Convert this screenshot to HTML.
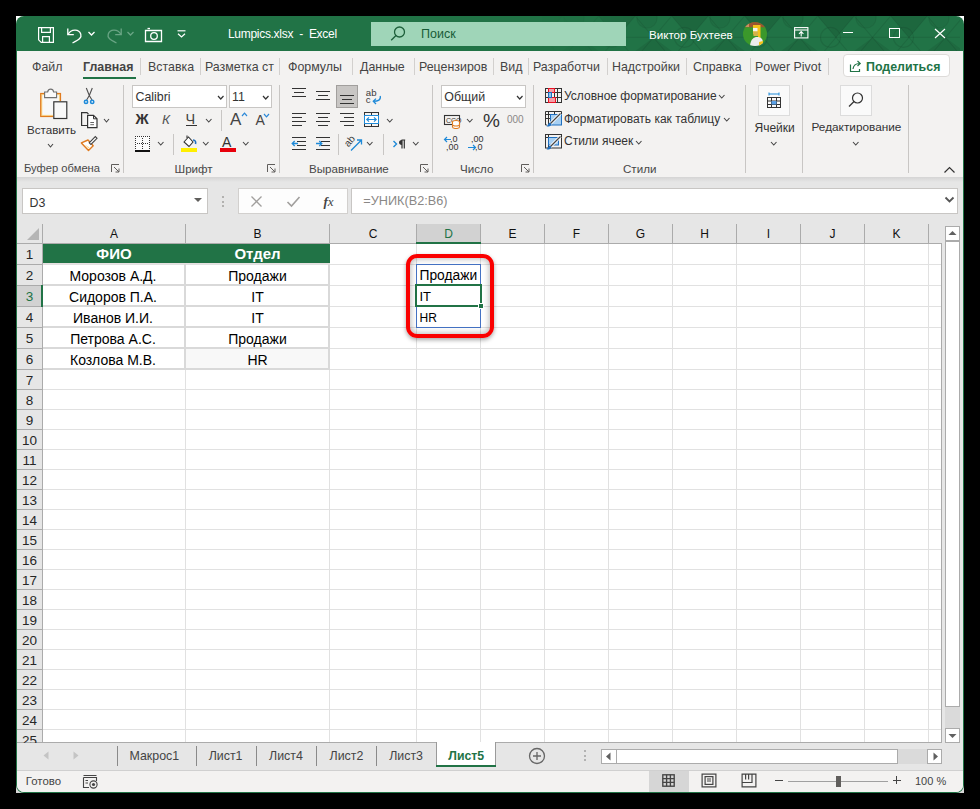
<!DOCTYPE html><html><head><meta charset="utf-8"><style>
html,body{margin:0;padding:0;}body{width:980px;height:809px;background:#000;position:relative;overflow:hidden;font-family:"Liberation Sans",sans-serif;font-size:12px;color:#262626}
div,svg{box-sizing:border-box}
</style></head><body>
<div style="position:absolute;left:16px;top:16px;width:948px;height:777px;background:linear-gradient(#fff 0,#fff 50%,#d8d8d8 50%,#d8d8d8 100%)"></div>
<div style="position:absolute;left:16px;top:16px;width:948px;height:777px;background:#217346;border-radius:8px"></div>
<div style="position:absolute;left:17px;top:51px;width:946px;height:741px;background:#f3f2f1;border-radius:0 0 7px 7px;overflow:hidden"></div>
<svg style="position:absolute;left:540px;top:16px;" width="420" height="35" viewBox="0 0 420 35"><defs><linearGradient id="fadeg" x1="0" x2="1" y1="0" y2="0"><stop offset="0" stop-color="#fff" stop-opacity="0"/><stop offset="0.25" stop-color="#fff" stop-opacity="1"/></linearGradient><mask id="fadem"><rect x="0" y="0" width="420" height="35" fill="url(#fadeg)"/></mask></defs><g mask="url(#fadem)"><path d="M-14.3 0 L22.2 0 L4.0 21.4 Z" fill="rgba(0,0,0,0.1)"/><path d="M-14.3 0 L-44.1 35 M-14.3 0 L15.5 35" stroke="rgba(0,0,0,0.09)" stroke-width="1.1" fill="none"/><path d="M40.5 21.4 L22.2 35 L58.7 35 Z" fill="rgba(0,0,0,0.08)"/><path d="M22.2 0 L-7.6 35 M22.2 0 L52.0 35" stroke="rgba(0,0,0,0.09)" stroke-width="1.1" fill="none"/><path d="M58.7 0 L95.2 0 L77.0 21.4 Z" fill="rgba(0,0,0,0.1)"/><path d="M58.7 0 L28.9 35 M58.7 0 L88.5 35" stroke="rgba(0,0,0,0.09)" stroke-width="1.1" fill="none"/><path d="M113.5 21.4 L95.2 35 L131.7 35 Z" fill="rgba(0,0,0,0.08)"/><path d="M95.2 0 L65.4 35 M95.2 0 L125.0 35" stroke="rgba(0,0,0,0.09)" stroke-width="1.1" fill="none"/><path d="M131.7 0 L168.2 0 L150.0 21.4 Z" fill="rgba(0,0,0,0.1)"/><path d="M131.7 0 L101.9 35 M131.7 0 L161.5 35" stroke="rgba(0,0,0,0.09)" stroke-width="1.1" fill="none"/><path d="M186.5 21.4 L168.2 35 L204.7 35 Z" fill="rgba(0,0,0,0.08)"/><path d="M168.2 0 L138.4 35 M168.2 0 L198.0 35" stroke="rgba(0,0,0,0.09)" stroke-width="1.1" fill="none"/><path d="M204.7 0 L241.2 0 L223.0 21.4 Z" fill="rgba(0,0,0,0.1)"/><path d="M204.7 0 L174.9 35 M204.7 0 L234.5 35" stroke="rgba(0,0,0,0.09)" stroke-width="1.1" fill="none"/><path d="M259.5 21.4 L241.2 35 L277.7 35 Z" fill="rgba(0,0,0,0.08)"/><path d="M241.2 0 L211.4 35 M241.2 0 L271.0 35" stroke="rgba(0,0,0,0.09)" stroke-width="1.1" fill="none"/><path d="M277.7 0 L314.2 0 L296.0 21.4 Z" fill="rgba(0,0,0,0.1)"/><path d="M277.7 0 L247.9 35 M277.7 0 L307.5 35" stroke="rgba(0,0,0,0.09)" stroke-width="1.1" fill="none"/><path d="M332.5 21.4 L314.2 35 L350.7 35 Z" fill="rgba(0,0,0,0.08)"/><path d="M314.2 0 L284.4 35 M314.2 0 L344.0 35" stroke="rgba(0,0,0,0.09)" stroke-width="1.1" fill="none"/><path d="M350.7 0 L387.2 0 L369.0 21.4 Z" fill="rgba(0,0,0,0.1)"/><path d="M350.7 0 L320.9 35 M350.7 0 L380.5 35" stroke="rgba(0,0,0,0.09)" stroke-width="1.1" fill="none"/><path d="M405.5 21.4 L387.2 35 L423.7 35 Z" fill="rgba(0,0,0,0.08)"/><path d="M387.2 0 L357.4 35 M387.2 0 L417.0 35" stroke="rgba(0,0,0,0.09)" stroke-width="1.1" fill="none"/><path d="M423.7 0 L460.2 0 L442.0 21.4 Z" fill="rgba(0,0,0,0.1)"/><path d="M423.7 0 L393.9 35 M423.7 0 L453.5 35" stroke="rgba(0,0,0,0.09)" stroke-width="1.1" fill="none"/><path d="M478.5 21.4 L460.2 35 L496.7 35 Z" fill="rgba(0,0,0,0.08)"/><path d="M460.2 0 L430.4 35 M460.2 0 L490.0 35" stroke="rgba(0,0,0,0.09)" stroke-width="1.1" fill="none"/><path d="M496.7 0 L533.2 0 L515.0 21.4 Z" fill="rgba(0,0,0,0.1)"/><path d="M496.7 0 L466.9 35 M496.7 0 L526.5 35" stroke="rgba(0,0,0,0.09)" stroke-width="1.1" fill="none"/><path d="M551.5 21.4 L533.2 35 L569.7 35 Z" fill="rgba(0,0,0,0.08)"/><path d="M533.2 0 L503.4 35 M533.2 0 L563.0 35" stroke="rgba(0,0,0,0.09)" stroke-width="1.1" fill="none"/><circle cx="-1.5" cy="21.4" r="10" stroke="rgba(0,0,0,0.09)" stroke-width="1.2" fill="none"/><circle cx="34.0" cy="2" r="10" stroke="rgba(0,0,0,0.08)" stroke-width="1.2" fill="rgba(0,0,0,0.04)"/><circle cx="71.5" cy="21.4" r="10" stroke="rgba(0,0,0,0.09)" stroke-width="1.2" fill="none"/><circle cx="107.0" cy="2" r="10" stroke="rgba(0,0,0,0.08)" stroke-width="1.2" fill="rgba(0,0,0,0.04)"/><circle cx="144.5" cy="21.4" r="10" stroke="rgba(0,0,0,0.09)" stroke-width="1.2" fill="none"/><circle cx="180.0" cy="2" r="10" stroke="rgba(0,0,0,0.08)" stroke-width="1.2" fill="rgba(0,0,0,0.04)"/><circle cx="217.5" cy="21.4" r="10" stroke="rgba(0,0,0,0.09)" stroke-width="1.2" fill="none"/><circle cx="253.0" cy="2" r="10" stroke="rgba(0,0,0,0.08)" stroke-width="1.2" fill="rgba(0,0,0,0.04)"/><circle cx="290.5" cy="21.4" r="10" stroke="rgba(0,0,0,0.09)" stroke-width="1.2" fill="none"/><circle cx="326.0" cy="2" r="10" stroke="rgba(0,0,0,0.08)" stroke-width="1.2" fill="rgba(0,0,0,0.04)"/><circle cx="363.5" cy="21.4" r="10" stroke="rgba(0,0,0,0.09)" stroke-width="1.2" fill="none"/><circle cx="399.0" cy="2" r="10" stroke="rgba(0,0,0,0.08)" stroke-width="1.2" fill="rgba(0,0,0,0.04)"/><circle cx="436.5" cy="21.4" r="10" stroke="rgba(0,0,0,0.09)" stroke-width="1.2" fill="none"/><circle cx="472.0" cy="2" r="10" stroke="rgba(0,0,0,0.08)" stroke-width="1.2" fill="rgba(0,0,0,0.04)"/><circle cx="509.5" cy="21.4" r="10" stroke="rgba(0,0,0,0.09)" stroke-width="1.2" fill="none"/><circle cx="545.0" cy="2" r="10" stroke="rgba(0,0,0,0.08)" stroke-width="1.2" fill="rgba(0,0,0,0.04)"/><path d="M0 21.4 H420" stroke="rgba(0,0,0,0.08)" stroke-width="1.1"/></g></svg>
<svg style="position:absolute;left:37px;top:26px;" width="19" height="18" viewBox="0 0 19 18"><g fill="none" stroke="#fff" stroke-width="1.2"><path d="M1.6 1.6 H16.4 V16.4 H4.2 L1.6 13.8 Z"/><path d="M4.6 1.6 V6.4 H13.4 V1.6"/><path d="M5.6 16.4 V10.6 H12.4 V16.4"/></g></svg>
<svg style="position:absolute;left:66px;top:26px;" width="18" height="18" viewBox="0 0 18 18"><g fill="none" stroke="#fff" stroke-width="1.3"><path d="M2 8.5 C5 3 13 2.5 14.8 8.2 C15.8 11.5 13.5 13.5 6.5 17"/><path d="M1.8 2.5 V8.6 H7.8"/></g></svg>
<svg style="position:absolute;left:87px;top:30px;" width="9" height="7" viewBox="0 0 9 7"><path d="M1.5 2 L4.5 5 L7.5 2" fill="none" stroke="#fff" stroke-width="1.3"/></svg>
<svg style="position:absolute;left:105px;top:26px;" width="18" height="18" viewBox="0 0 18 18"><g fill="none" stroke="#6aa585" stroke-width="1.3"><path d="M16 8.5 C13 3 5 2.5 3.2 8.2 C2.2 11.5 4.5 13.5 11.5 17"/><path d="M16.2 2.5 V8.6 H10.2"/></g></svg>
<svg style="position:absolute;left:126px;top:30px;" width="9" height="7" viewBox="0 0 9 7"><path d="M1.5 2 L4.5 5 L7.5 2" fill="none" stroke="#6aa585" stroke-width="1.3"/></svg>
<svg style="position:absolute;left:144px;top:27px;" width="19" height="16" viewBox="0 0 19 16"><g fill="none" stroke="#fff" stroke-width="1.3"><path d="M1.5 3.5 H17.5 V14.5 H1.5 Z"/><circle cx="10" cy="9" r="3.3"/><path d="M3.5 1.5 H6"/></g></svg>
<svg style="position:absolute;left:176px;top:29px;" width="11" height="10" viewBox="0 0 11 10"><g fill="none" stroke="#fff" stroke-width="1.2"><path d="M1.5 1.8 H9.5"/><path d="M2 4.8 L5.5 8 L9 4.8"/></g></svg>
<div style="position:absolute;left:228px;top:26px;white-space:nowrap;line-height:16px;color:#fff;font-size:12px;letter-spacing:-0.3px">Lumpics.xlsx&nbsp; - &nbsp;Excel</div>
<div style="position:absolute;left:371px;top:22px;width:255px;height:24px;background:#9fd5b8"></div>
<svg style="position:absolute;left:389px;top:25px;" width="18" height="18" viewBox="0 0 18 18"><g fill="none" stroke="#1d5f3a" stroke-width="1.3"><circle cx="10.5" cy="7" r="5"/><path d="M7 10.5 L2.2 15.3"/></g></svg>
<div style="position:absolute;left:421px;top:26px;white-space:nowrap;line-height:16px;color:#185c37;font-size:12.5px">Поиск</div>
<div style="position:absolute;left:649px;top:27px;white-space:nowrap;line-height:16px;color:#fff;font-size:11.6px">Виктор Бухтеев</div>
<svg style="position:absolute;left:742px;top:22px;" width="26" height="25" viewBox="0 0 26 25"><defs><clipPath id="av"><circle cx="13" cy="12" r="12"/></clipPath></defs><g clip-path="url(#av)"><rect width="26" height="25" fill="#3b982b"/><rect x="0" y="0" width="26" height="5.2" fill="#9a5530"/><rect x="3" y="1" width="4" height="4" fill="#c98e62"/><path d="M11 3 H18.5 V16 L16 17 V12 H11 Z" fill="#f3c21a"/><rect x="11" y="6" width="4.5" height="3.5" fill="#f2f2f2"/><path d="M11 9.5 H16 V14 H11.5 Z" fill="#d4b24a"/><path d="M8 24 C8.5 17 12 15 15 15 C19 15 21 17 21 21 L20 24 Z" fill="#ececec"/><path d="M17 20 L21 19 L21 23 L17 24 Z" fill="#f3c21a"/></g></svg>
<svg style="position:absolute;left:794px;top:27px;" width="15" height="12" viewBox="0 0 15 12"><g fill="none" stroke="#fff" stroke-width="1.1"><rect x="0.6" y="0.6" width="13.3" height="10.3"/><path d="M0.6 3 H13.9"/><path d="M7.2 9.5 V4.8 M5 6.8 L7.2 4.6 L9.4 6.8"/></g></svg>
<div style="position:absolute;left:843px;top:32px;width:10px;height:1px;background:#fff"></div>
<div style="position:absolute;left:889px;top:28px;width:11px;height:10px;border:1.1px solid #fff"></div>
<svg style="position:absolute;left:933.5px;top:27.5px;" width="12" height="11" viewBox="0 0 12 11"><path d="M1 1 L11 10 M11 1 L1 10" stroke="#fff" stroke-width="1.2"/></svg>
<div style="position:absolute;left:32px;top:59px;white-space:nowrap;line-height:16px;color:#444444;font-size:12.4px">Файл</div>
<div style="position:absolute;left:83px;top:59px;white-space:nowrap;line-height:16px;color:#444444;font-size:12.4px"><b>Главная</b></div>
<div style="position:absolute;left:148px;top:59px;white-space:nowrap;line-height:16px;color:#444444;font-size:12.4px">Вставка</div>
<div style="position:absolute;left:205px;top:59px;white-space:nowrap;line-height:16px;color:#444444;font-size:12.4px">Разметка ст</div>
<div style="position:absolute;left:288px;top:59px;white-space:nowrap;line-height:16px;color:#444444;font-size:12.4px">Формулы</div>
<div style="position:absolute;left:360px;top:59px;white-space:nowrap;line-height:16px;color:#444444;font-size:12.4px">Данные</div>
<div style="position:absolute;left:419px;top:59px;white-space:nowrap;line-height:16px;color:#444444;font-size:12.4px">Рецензиров</div>
<div style="position:absolute;left:500px;top:59px;white-space:nowrap;line-height:16px;color:#444444;font-size:12.4px">Вид</div>
<div style="position:absolute;left:533px;top:59px;white-space:nowrap;line-height:16px;color:#444444;font-size:12.4px">Разработчи</div>
<div style="position:absolute;left:612px;top:59px;white-space:nowrap;line-height:16px;color:#444444;font-size:12.4px">Надстройки</div>
<div style="position:absolute;left:693px;top:59px;white-space:nowrap;line-height:16px;color:#444444;font-size:12.4px">Справка</div>
<div style="position:absolute;left:755px;top:59px;white-space:nowrap;line-height:16px;color:#444444;font-size:12.4px">Power Pivot</div>
<div style="position:absolute;left:140px;top:58px;width:1px;height:17px;background:#d2d0ce"></div>
<div style="position:absolute;left:200px;top:58px;width:1px;height:17px;background:#d2d0ce"></div>
<div style="position:absolute;left:279px;top:58px;width:1px;height:17px;background:#d2d0ce"></div>
<div style="position:absolute;left:352px;top:58px;width:1px;height:17px;background:#d2d0ce"></div>
<div style="position:absolute;left:414px;top:58px;width:1px;height:17px;background:#d2d0ce"></div>
<div style="position:absolute;left:493px;top:58px;width:1px;height:17px;background:#d2d0ce"></div>
<div style="position:absolute;left:528px;top:58px;width:1px;height:17px;background:#d2d0ce"></div>
<div style="position:absolute;left:607px;top:58px;width:1px;height:17px;background:#d2d0ce"></div>
<div style="position:absolute;left:686px;top:58px;width:1px;height:17px;background:#d2d0ce"></div>
<div style="position:absolute;left:750px;top:58px;width:1px;height:17px;background:#d2d0ce"></div>
<div style="position:absolute;left:828px;top:58px;width:1px;height:17px;background:#d2d0ce"></div>
<div style="position:absolute;left:83px;top:77px;width:53px;height:2px;background:#217346"></div>
<div style="position:absolute;left:843px;top:54px;width:107px;height:23px;background:#fff;border:1px solid #dddbd9;border-radius:4px"></div>
<svg style="position:absolute;left:849px;top:59px;" width="14" height="14" viewBox="0 0 14 14"><g fill="none" stroke="#217346" stroke-width="1.2"><path d="M1.5 5.5 V12.5 H10.5 V10"/><path d="M4 10 C4.5 6 7 4.5 10.5 4.5 M8.5 2 L11.2 4.5 L8.5 7"/></g></svg>
<div style="position:absolute;left:866px;top:59px;white-space:nowrap;line-height:16px;color:#217346;font-size:12.4px"><b>Поделиться</b></div>
<div style="position:absolute;left:123px;top:85px;width:1px;height:88px;background:#c8c6c4"></div>
<div style="position:absolute;left:279px;top:85px;width:1px;height:88px;background:#c8c6c4"></div>
<div style="position:absolute;left:432px;top:85px;width:1px;height:88px;background:#c8c6c4"></div>
<div style="position:absolute;left:533px;top:85px;width:1px;height:88px;background:#c8c6c4"></div>
<div style="position:absolute;left:745px;top:85px;width:1px;height:88px;background:#c8c6c4"></div>
<div style="position:absolute;left:802px;top:85px;width:1px;height:88px;background:#c8c6c4"></div>
<div style="position:absolute;left:908px;top:85px;width:1px;height:88px;background:#c8c6c4"></div>
<div style="position:absolute;left:17px;top:177px;width:946px;height:5px;background:linear-gradient(#d4d4d4,#e6e6e6)"></div>
<div style="position:absolute;left:17px;top:182px;width:946px;height:42px;background:#e6e6e6"></div>
<svg style="position:absolute;left:38px;top:87px;" width="31" height="34" viewBox="0 0 31 34">
<rect x="2.7" y="6.5" width="19.8" height="23" fill="#f9d88e" stroke="#e07b1f" stroke-width="1.2"/>
<rect x="4.3" y="8.1" width="16.6" height="19.8" fill="#f8f8f8"/>
<path d="M6.6 10.6 V5 H9.6 C10.5 1.2 15 1.2 15.6 5 H18.6 V10.6 Z" fill="#fafafa" stroke="#707070" stroke-width="1.1"/>
<rect x="15" y="14" width="14.5" height="18" fill="#fff"/>
<rect x="15.8" y="14.8" width="13" height="16.7" fill="#f8f8f8" stroke="#333" stroke-width="1.2"/>
</svg>
<div style="position:absolute;left:27px;top:124.18px;white-space:nowrap;line-height:11.6px;font-size:11.6px;color:#333333">Вставить</div>
<svg style="position:absolute;left:47px;top:142.5px;" width="7" height="5" viewBox="0 0 7 5"><path d="M1 1 L3.50 4.00 L6.00 1" fill="none" stroke="#444" stroke-width="1.1"/></svg>
<svg style="position:absolute;left:82px;top:86px;" width="14" height="19" viewBox="0 0 14 19"><g fill="none" stroke="#505050" stroke-width="1.1"><path d="M4.3 2 L7.3 9.5 M10.3 2 L7.3 9.5 M7.3 9.5 L4.6 14 M7.3 9.5 L10 14"/></g><g fill="#fff" stroke="#1f8ad8" stroke-width="1.6"><circle cx="4" cy="15.9" r="1.6"/><circle cx="10.2" cy="15.9" r="1.6"/></g></svg>
<svg style="position:absolute;left:80px;top:111px;" width="19" height="18" viewBox="0 0 19 18"><g fill="none" stroke="#333" stroke-width="1.2"><path d="M7.5 14.5 H1.6 V1.6 H7 L8.5 3.1"/></g><path d="M7.6 4.3 H13.5 L17 7.8 V16.6 H7.6 Z" fill="#fff" stroke="#333" stroke-width="1.2"/><path d="M13.5 4.3 V7.8 H17" fill="none" stroke="#333" stroke-width="1"/><path d="M10.3 11.5 H14 M10.3 13.7 H14" stroke="#555" stroke-width="0.9"/></svg>
<svg style="position:absolute;left:103px;top:118px;" width="7" height="5" viewBox="0 0 7 5"><path d="M1 1 L3.50 4.00 L6.00 1" fill="none" stroke="#444" stroke-width="1.1"/></svg>
<svg style="position:absolute;left:80px;top:135px;" width="18" height="17" viewBox="0 0 18 17"><path d="M1.4 7.9 L8.5 15.5 L13.2 10.8 L8 5 Z" fill="#fff" stroke="#e07b1f" stroke-width="1.4" stroke-linejoin="round"/><path d="M4.5 9.2 L8.5 13.5 L9.5 12.5 Z" fill="#f9d88e"/><path d="M9.2 7.8 L15.3 1.6 L17 3.3 L10.9 9.4 Z" fill="#fff" stroke="#444" stroke-width="1.1"/></svg>
<div style="position:absolute;left:24px;top:163.02px;white-space:nowrap;line-height:11.2px;font-size:11.2px;color:#484848">Буфер обмена</div>
<svg style="position:absolute;left:111px;top:164px;" width="9" height="9" viewBox="0 0 9 9"><g fill="none" stroke="#605e5c" stroke-width="1"><path d="M0.5 8 V0.5 H8"/><path d="M3 3 L8 8 M8 4.5 V8 H4.5"/></g></svg>
<div style="position:absolute;left:132px;top:85px;width:95px;height:23px;background:#fff;border:1px solid #c8c6c4"></div>
<div style="position:absolute;left:135.5px;top:90.50px;white-space:nowrap;line-height:12.4px;font-size:12.4px;color:#333333">Calibri</div>
<svg style="position:absolute;left:216.5px;top:94.5px;" width="7.5" height="5" viewBox="0 0 7.5 5"><path d="M1 1 L3.75 4.00 L6.50 1" fill="none" stroke="#333" stroke-width="1.2"/></svg>
<div style="position:absolute;left:229px;top:85px;width:43px;height:23px;background:#fff;border:1px solid #c8c6c4"></div>
<div style="position:absolute;left:232px;top:90.50px;white-space:nowrap;line-height:12.4px;font-size:12.4px;color:#333333">11</div>
<svg style="position:absolute;left:261.5px;top:94.5px;" width="7.5" height="5" viewBox="0 0 7.5 5"><path d="M1 1 L3.75 4.00 L6.50 1" fill="none" stroke="#333" stroke-width="1.2"/></svg>
<div style="position:absolute;left:135.5px;top:112.23px;white-space:nowrap;line-height:14.5px;font-size:14.5px;color:#333"><b>Ж</b></div>
<div style="position:absolute;left:162px;top:113.07px;white-space:nowrap;line-height:13.5px;font-size:13.5px;color:#555"><i>К</i></div>
<div style="position:absolute;left:185.5px;top:112.03px;white-space:nowrap;line-height:14.5px;font-size:14.5px;color:#444">Ч</div>
<div style="position:absolute;left:186px;top:125px;width:11px;height:1px;background:#333"></div>
<svg style="position:absolute;left:204.5px;top:118px;" width="7.5" height="5" viewBox="0 0 7.5 5"><path d="M1 1 L3.75 4.00 L6.50 1" fill="none" stroke="#444" stroke-width="1.1"/></svg>
<div style="position:absolute;left:221px;top:110px;width:1px;height:21px;background:#c8c6c4"></div>
<div style="position:absolute;left:230px;top:110.61px;white-space:nowrap;line-height:17px;font-size:17px;color:#444">A</div>
<svg style="position:absolute;left:241px;top:112px;" width="7" height="5" viewBox="0 0 7 5"><path d="M1 4 L3.5 1.2 L6 4" fill="none" stroke="#2b88d8" stroke-width="1.2"/></svg>
<div style="position:absolute;left:255.5px;top:113.15px;white-space:nowrap;line-height:14px;font-size:14px;color:#444">A</div>
<svg style="position:absolute;left:263px;top:113px;" width="7" height="5" viewBox="0 0 7 5"><path d="M1 1 L3.5 3.8 L6 1" fill="none" stroke="#2b88d8" stroke-width="1.2"/></svg>
<svg style="position:absolute;left:134px;top:135px;" width="17" height="17" viewBox="0 0 17 17"><rect x="1" y="1" width="15" height="14" fill="#fbfbfb"/><g fill="#333"><rect x="1" y="1" width="1" height="1"/><rect x="3" y="1" width="1" height="1"/><rect x="5" y="1" width="1" height="1"/><rect x="7" y="1" width="1" height="1"/><rect x="9" y="1" width="1" height="1"/><rect x="11" y="1" width="1" height="1"/><rect x="13" y="1" width="1" height="1"/><rect x="15" y="1" width="1" height="1"/><rect x="1" y="3" width="1" height="1"/><rect x="15" y="3" width="1" height="1"/><rect x="8" y="3" width="1" height="1"/><rect x="1" y="5" width="1" height="1"/><rect x="15" y="5" width="1" height="1"/><rect x="8" y="5" width="1" height="1"/><rect x="1" y="7" width="1" height="1"/><rect x="15" y="7" width="1" height="1"/><rect x="8" y="7" width="1" height="1"/><rect x="1" y="9" width="1" height="1"/><rect x="15" y="9" width="1" height="1"/><rect x="8" y="9" width="1" height="1"/><rect x="1" y="11" width="1" height="1"/><rect x="15" y="11" width="1" height="1"/><rect x="8" y="11" width="1" height="1"/><rect x="1" y="13" width="1" height="1"/><rect x="15" y="13" width="1" height="1"/><rect x="8" y="13" width="1" height="1"/><rect x="3" y="8" width="1" height="1"/><rect x="5" y="8" width="1" height="1"/><rect x="11" y="8" width="1" height="1"/><rect x="13" y="8" width="1" height="1"/><rect x="7" y="8" width="1" height="1"/><rect x="9" y="8" width="1" height="1"/><rect x="8" y="7" width="1" height="1"/><rect x="8" y="9" width="1" height="1"/></g><rect x="1" y="15" width="15" height="2" fill="#111"/></svg>
<svg style="position:absolute;left:156.5px;top:141px;" width="7.5" height="5" viewBox="0 0 7.5 5"><path d="M1 1 L3.75 4.00 L6.50 1" fill="none" stroke="#444" stroke-width="1.1"/></svg>
<div style="position:absolute;left:173px;top:134px;width:1px;height:21px;background:#c8c6c4"></div>
<svg style="position:absolute;left:180px;top:134px;" width="18" height="19" viewBox="0 0 18 19"><path d="M4 8 L8.5 3 L13 8 L9 12.5 Z" fill="#fff" stroke="#333" stroke-width="1.1"/><path d="M7 4 V1.5" stroke="#333" stroke-width="1.1"/><path d="M13 6 C15.5 6 16 8 15.5 10" fill="none" stroke="#1f6fbf" stroke-width="1.6"/><rect x="1" y="14" width="16" height="4" fill="#ffef00"/></svg>
<svg style="position:absolute;left:202px;top:141px;" width="7.5" height="5" viewBox="0 0 7.5 5"><path d="M1 1 L3.75 4.00 L6.50 1" fill="none" stroke="#444" stroke-width="1.1"/></svg>
<div style="position:absolute;left:222px;top:135.15px;white-space:nowrap;line-height:14px;font-size:14px;color:#333">A</div>
<div style="position:absolute;left:220px;top:148px;width:16px;height:4px;background:#e8000b"></div>
<svg style="position:absolute;left:241.5px;top:141px;" width="7.5" height="5" viewBox="0 0 7.5 5"><path d="M1 1 L3.75 4.00 L6.50 1" fill="none" stroke="#444" stroke-width="1.1"/></svg>
<div style="position:absolute;left:174.5px;top:162.88px;white-space:nowrap;line-height:11.6px;font-size:11.6px;color:#484848">Шрифт</div>
<svg style="position:absolute;left:267px;top:164px;" width="9" height="9" viewBox="0 0 9 9"><g fill="none" stroke="#605e5c" stroke-width="1"><path d="M0.5 8 V0.5 H8"/><path d="M3 3 L8 8 M8 4.5 V8 H4.5"/></g></svg>
<div style="position:absolute;left:292px;top:88px;width:14px;height:1px;background:#333"></div>
<div style="position:absolute;left:294px;top:92px;width:10px;height:1px;background:#333"></div>
<div style="position:absolute;left:292px;top:96px;width:14px;height:1px;background:#333"></div>
<div style="position:absolute;left:316px;top:91px;width:14px;height:1px;background:#333"></div>
<div style="position:absolute;left:318px;top:95px;width:10px;height:1px;background:#333"></div>
<div style="position:absolute;left:316px;top:99px;width:14px;height:1px;background:#333"></div>
<div style="position:absolute;left:336px;top:85px;width:22px;height:23px;background:#c8c6c4;border:1px solid #a19f9d"></div>
<div style="position:absolute;left:340px;top:95px;width:14px;height:1px;background:#333"></div>
<div style="position:absolute;left:342px;top:99px;width:10px;height:1px;background:#333"></div>
<div style="position:absolute;left:340px;top:103px;width:14px;height:1px;background:#333"></div>
<svg style="position:absolute;left:364px;top:86px;" width="20" height="20" viewBox="0 0 20 20"><text x="1.8" y="9.6" font-family="Liberation Sans" font-size="9.6" fill="#3a3a3a">ab</text><text x="1.8" y="16.6" font-family="Liberation Sans" font-size="9.6" fill="#3a3a3a">c</text><path d="M16.2 10 C17.2 14 14 15.3 9.5 15.3 M12 12.6 L9.3 15.3 L12 18" fill="none" stroke="#1f8ad8" stroke-width="1.3"/></svg>
<div style="position:absolute;left:292px;top:113px;width:14px;height:1px;background:#333"></div>
<div style="position:absolute;left:292px;top:117px;width:10px;height:1px;background:#333"></div>
<div style="position:absolute;left:292px;top:121px;width:14px;height:1px;background:#333"></div>
<div style="position:absolute;left:292px;top:125px;width:10px;height:1px;background:#333"></div>
<div style="position:absolute;left:316px;top:113px;width:14px;height:1px;background:#333"></div>
<div style="position:absolute;left:318px;top:117px;width:10px;height:1px;background:#333"></div>
<div style="position:absolute;left:316px;top:121px;width:14px;height:1px;background:#333"></div>
<div style="position:absolute;left:318px;top:125px;width:10px;height:1px;background:#333"></div>
<div style="position:absolute;left:340px;top:113px;width:14px;height:1px;background:#333"></div>
<div style="position:absolute;left:344px;top:117px;width:10px;height:1px;background:#333"></div>
<div style="position:absolute;left:340px;top:121px;width:14px;height:1px;background:#333"></div>
<div style="position:absolute;left:344px;top:125px;width:10px;height:1px;background:#333"></div>
<svg style="position:absolute;left:363px;top:111px;" width="17" height="17" viewBox="0 0 17 17"><g fill="none" stroke="#333" stroke-width="1"><rect x="1.5" y="1.5" width="14" height="14"/><path d="M8.5 1.5 V4 M8.5 12.5 V15.5"/></g><rect x="1.5" y="4.5" width="14" height="8" fill="#fff" stroke="#1f8ad8" stroke-width="1"/><path d="M4 8.5 H13 M6 6.3 L3.8 8.5 L6 10.7 M11 6.3 L13.2 8.5 L11 10.7" fill="none" stroke="#1f8ad8" stroke-width="1.2"/></svg>
<svg style="position:absolute;left:385.5px;top:118px;" width="7.5" height="5" viewBox="0 0 7.5 5"><path d="M1 1 L3.75 4.00 L6.50 1" fill="none" stroke="#444" stroke-width="1.1"/></svg>
<div style="position:absolute;left:292px;top:137px;width:14px;height:1px;background:#333"></div>
<div style="position:absolute;left:297px;top:141px;width:9px;height:1px;background:#333"></div>
<div style="position:absolute;left:297px;top:145px;width:9px;height:1px;background:#333"></div>
<div style="position:absolute;left:292px;top:149px;width:14px;height:1px;background:#333"></div>
<svg style="position:absolute;left:291px;top:140px;" width="8" height="7" viewBox="0 0 8 7"><path d="M1.2 3.5 H7 M3.7 1 L1.2 3.5 L3.7 6" fill="none" stroke="#1f8ad8" stroke-width="1.3"/></svg>
<div style="position:absolute;left:316px;top:137px;width:14px;height:1px;background:#333"></div>
<div style="position:absolute;left:321px;top:141px;width:9px;height:1px;background:#333"></div>
<div style="position:absolute;left:321px;top:145px;width:9px;height:1px;background:#333"></div>
<div style="position:absolute;left:316px;top:149px;width:14px;height:1px;background:#333"></div>
<svg style="position:absolute;left:315px;top:140px;" width="8" height="7" viewBox="0 0 8 7"><path d="M1 3.5 H6.8 M4.3 1 L6.8 3.5 L4.3 6" fill="none" stroke="#1f8ad8" stroke-width="1.3"/></svg>
<div style="position:absolute;left:338px;top:134px;width:1px;height:21px;background:#c8c6c4"></div>
<svg style="position:absolute;left:345px;top:133px;" width="20" height="20" viewBox="0 0 20 20"><text x="0" y="0" font-family="Liberation Sans" font-size="10" fill="#3a3a3a" transform="translate(3.5 14.5) rotate(-50)">ab</text><path d="M6 17.5 L16.5 7 M12 7 H16.5 V11.5" fill="none" stroke="#1f8ad8" stroke-width="1.3"/></svg>
<svg style="position:absolute;left:365.5px;top:141px;" width="7.5" height="5" viewBox="0 0 7.5 5"><path d="M1 1 L3.75 4.00 L6.50 1" fill="none" stroke="#444" stroke-width="1.1"/></svg>
<div style="position:absolute;left:383px;top:134px;width:1px;height:21px;background:#c8c6c4"></div>
<svg style="position:absolute;left:391px;top:138px;" width="16" height="12" viewBox="0 0 16 12"><path d="M2.5 3 L5.5 6 L2.5 9" fill="none" stroke="#1f8ad8" stroke-width="1.4"/><path d="M10.5 2 H14.2 M11 2 V10.5 M13.3 2 V10.5" fill="none" stroke="#333" stroke-width="1.2"/><path d="M11 2 C7 2 7 7 11 7 Z" fill="#333"/></svg>
<svg style="position:absolute;left:412px;top:141px;" width="7.5" height="5" viewBox="0 0 7.5 5"><path d="M1 1 L3.75 4.00 L6.50 1" fill="none" stroke="#444" stroke-width="1.1"/></svg>
<div style="position:absolute;left:309px;top:162.88px;white-space:nowrap;line-height:11.6px;font-size:11.6px;color:#484848">Выравнивание</div>
<svg style="position:absolute;left:420px;top:164px;" width="9" height="9" viewBox="0 0 9 9"><g fill="none" stroke="#605e5c" stroke-width="1"><path d="M0.5 8 V0.5 H8"/><path d="M3 3 L8 8 M8 4.5 V8 H4.5"/></g></svg>
<div style="position:absolute;left:441px;top:85px;width:85px;height:23px;background:#fff;border:1px solid #c8c6c4"></div>
<div style="position:absolute;left:444.3px;top:90.50px;white-space:nowrap;line-height:12.4px;font-size:12.4px;color:#333333">Общий</div>
<svg style="position:absolute;left:515.5px;top:94.5px;" width="7.5" height="5" viewBox="0 0 7.5 5"><path d="M1 1 L3.75 4.00 L6.50 1" fill="none" stroke="#333" stroke-width="1.2"/></svg>
<svg style="position:absolute;left:443px;top:114px;" width="19" height="15" viewBox="0 0 19 15"><g fill="none" stroke="#333" stroke-width="1.1"><rect x="1.5" y="1.5" width="15" height="9"/></g><text x="3" y="9" font-family="Liberation Sans" font-size="7" fill="#333">CCO</text><g fill="#fff" stroke="#e07b1f" stroke-width="1.1"><ellipse cx="13" cy="8" rx="3.5" ry="1.5"/><path d="M9.5 8 V13 C9.5 15 16.5 15 16.5 13 V8"/><path d="M9.5 10.5 C9.5 12.5 16.5 12.5 16.5 10.5"/></g></svg>
<svg style="position:absolute;left:465.5px;top:118px;" width="7.5" height="5" viewBox="0 0 7.5 5"><path d="M1 1 L3.75 4.00 L6.50 1" fill="none" stroke="#444" stroke-width="1.1"/></svg>
<div style="position:absolute;left:483px;top:110.92px;white-space:nowrap;line-height:19px;font-size:19px;color:#333">%</div>
<div style="position:absolute;left:507px;top:115.03px;white-space:nowrap;line-height:10px;font-size:10px;color:#8a8886">000</div>
<svg style="position:absolute;left:443px;top:134px;" width="18" height="18" viewBox="0 0 18 18"><text x="7" y="8" font-family="Liberation Sans" font-size="9" fill="#333">,0</text><text x="3" y="16" font-family="Liberation Sans" font-size="9" fill="#333">,00</text><path d="M1.5 5.5 H8 M4 3 L1.5 5.5 L4 8" fill="none" stroke="#1f8ad8" stroke-width="1.2"/></svg>
<svg style="position:absolute;left:467px;top:134px;" width="18" height="18" viewBox="0 0 18 18"><text x="4" y="8" font-family="Liberation Sans" font-size="9" fill="#333">,00</text><text x="8" y="16" font-family="Liberation Sans" font-size="9" fill="#333">,0</text><path d="M1 13.5 H8.5 M6 11 L8.5 13.5 L6 16" fill="none" stroke="#1f8ad8" stroke-width="1.2"/></svg>
<div style="position:absolute;left:460px;top:162.88px;white-space:nowrap;line-height:11.6px;font-size:11.6px;color:#484848">Число</div>
<svg style="position:absolute;left:521px;top:164px;" width="9" height="9" viewBox="0 0 9 9"><g fill="none" stroke="#605e5c" stroke-width="1"><path d="M0.5 8 V0.5 H8"/><path d="M3 3 L8 8 M8 4.5 V8 H4.5"/></g></svg>
<svg style="position:absolute;left:544px;top:87px;" width="19" height="17" viewBox="0 0 19 17"><g fill="none" stroke="#333" stroke-width="1"><rect x="1.5" y="1.5" width="16" height="14"/><path d="M4.5 1.5 V15.5 M10.5 1.5 V15.5 M13.5 1.5 V15.5 M1.5 5.5 H17.5 M1.5 10.5 H17.5"/></g><rect x="4.5" y="1.5" width="6" height="4" fill="#f4a0a8" stroke="#e81123" stroke-width="1"/><rect x="4.5" y="10.5" width="7" height="5" fill="#f4a0a8" stroke="#e81123" stroke-width="1"/><rect x="4.5" y="5.5" width="3" height="5" fill="#8cc4f0" stroke="#1f6fbf" stroke-width="1"/></svg>
<div style="position:absolute;left:564px;top:89.84px;white-space:nowrap;line-height:12px;font-size:12px;color:#333333">Условное форматирование</div>
<svg style="position:absolute;left:718px;top:94px;" width="7.5" height="5" viewBox="0 0 7.5 5"><path d="M1 1 L3.75 4.00 L6.50 1" fill="none" stroke="#444" stroke-width="1.1"/></svg>
<svg style="position:absolute;left:544px;top:110px;" width="19" height="17" viewBox="0 0 19 17"><g fill="none" stroke="#333" stroke-width="1"><path d="M1.5 15 V1.5 H17.5 V4.5 M1.5 4.5 H17.5 M1.5 8.5 H6.5 M4.5 1.5 V15 M10.5 1.5 V4.5 M1.5 15 H3"/></g><rect x="6.5" y="4.5" width="11" height="10.5" fill="#a8d0f2" stroke="#1f6fbf" stroke-width="1"/><path d="M6 14 L16.5 3.5" stroke="#fff" stroke-width="3"/><path d="M6 14 L16.5 3.5" stroke="#444" stroke-width="1.3"/><path d="M2.5 16.5 C4 15.5 4 13 6 12.5 L7.5 14 C7 16 5 16.8 2.5 16.5 Z" fill="#1f6fbf"/></svg>
<div style="position:absolute;left:564px;top:112.54px;white-space:nowrap;line-height:12px;font-size:12px;color:#333333">Форматировать как таблицу</div>
<svg style="position:absolute;left:722.5px;top:117px;" width="7.5" height="5" viewBox="0 0 7.5 5"><path d="M1 1 L3.75 4.00 L6.50 1" fill="none" stroke="#444" stroke-width="1.1"/></svg>
<svg style="position:absolute;left:544px;top:133px;" width="19" height="17" viewBox="0 0 19 17"><g fill="none" stroke="#333" stroke-width="1"><rect x="1.5" y="1.5" width="16" height="13.5"/><path d="M1.5 4.5 H17.5 M4.5 1.5 V15"/></g><rect x="4.5" y="4.5" width="10" height="7.5" fill="#a8d0f2" stroke="#1f6fbf" stroke-width="1"/><path d="M6 14 L16.5 3.5" stroke="#fff" stroke-width="3"/><path d="M6 14 L16.5 3.5" stroke="#444" stroke-width="1.3"/><path d="M2.5 16.5 C4 15.5 4 13 6 12.5 L7.5 14 C7 16 5 16.8 2.5 16.5 Z" fill="#1f6fbf"/></svg>
<div style="position:absolute;left:564px;top:135.44px;white-space:nowrap;line-height:12px;font-size:12px;color:#333333">Стили ячеек</div>
<svg style="position:absolute;left:634.5px;top:140px;" width="7.5" height="5" viewBox="0 0 7.5 5"><path d="M1 1 L3.75 4.00 L6.50 1" fill="none" stroke="#444" stroke-width="1.1"/></svg>
<div style="position:absolute;left:623px;top:162.98px;white-space:nowrap;line-height:11.6px;font-size:11.6px;color:#484848">Стили</div>
<div style="position:absolute;left:758px;top:85px;width:32px;height:31px;background:#fafafa;border:1px solid #dcdcdc"></div>
<svg style="position:absolute;left:766px;top:92px;" width="16" height="17" viewBox="0 0 16 17"><g fill="none" stroke="#333" stroke-width="1"><rect x="1.5" y="5.5" width="13" height="10"/><path d="M1.5 9 H14.5 M1.5 12.5 H14.5 M5.5 5.5 V15.5 M10.5 5.5 V15.5"/></g><rect x="5.5" y="9" width="5" height="3.5" fill="#5aa0e6"/><path d="M3 2 H13 M3 0.5 V3.5 M13 0.5 V3.5" stroke="#1f8ad8" stroke-width="1" fill="none"/></svg>
<div style="position:absolute;left:754.5px;top:122.14px;white-space:nowrap;line-height:12px;font-size:12px;color:#333333">Ячейки</div>
<svg style="position:absolute;left:769.5px;top:141px;" width="7.5" height="5" viewBox="0 0 7.5 5"><path d="M1 1 L3.75 4.00 L6.50 1" fill="none" stroke="#444" stroke-width="1.1"/></svg>
<div style="position:absolute;left:840px;top:85px;width:32px;height:31px;background:#fafafa;border:1px solid #dcdcdc"></div>
<svg style="position:absolute;left:847px;top:91px;" width="18" height="18" viewBox="0 0 18 18"><g fill="none" stroke="#333" stroke-width="1.2"><circle cx="10.5" cy="7" r="5"/><path d="M7 10.5 L2 15.5"/></g></svg>
<div style="position:absolute;left:811.5px;top:122.31px;white-space:nowrap;line-height:11.8px;font-size:11.8px;color:#333333">Редактирование</div>
<svg style="position:absolute;left:851.5px;top:141px;" width="7.5" height="5" viewBox="0 0 7.5 5"><path d="M1 1 L3.75 4.00 L6.50 1" fill="none" stroke="#444" stroke-width="1.1"/></svg>
<svg style="position:absolute;left:943px;top:166px;" width="13" height="8" viewBox="0 0 13 8"><path d="M1.5 6.5 L6.5 1.5 L11.5 6.5" fill="none" stroke="#333" stroke-width="1.2"/></svg>
<div style="position:absolute;left:22px;top:188px;width:186px;height:26px;background:#fff;border:1px solid #c8c6c4"></div>
<div style="position:absolute;left:29.5px;top:196.50px;white-space:nowrap;line-height:12.4px;font-size:12.4px;color:#333">D3</div>
<svg style="position:absolute;left:193px;top:197px;" width="10" height="6" viewBox="0 0 10 6"><path d="M1 1 H9 L5 5 Z" fill="#605e5c"/></svg>
<div style="position:absolute;left:222px;top:196px;width:2px;height:2px;background:#a19f9d;border-radius:1px"></div>
<div style="position:absolute;left:222px;top:200.5px;width:2px;height:2px;background:#a19f9d;border-radius:1px"></div>
<div style="position:absolute;left:222px;top:205px;width:2px;height:2px;background:#a19f9d;border-radius:1px"></div>
<div style="position:absolute;left:238px;top:188px;width:110px;height:26px;background:#fdfdfd;border:1px solid #d2d0ce"></div>
<svg style="position:absolute;left:250px;top:195px;" width="13" height="13" viewBox="0 0 13 13"><path d="M1.5 1.5 L11.5 11.5 M11.5 1.5 L1.5 11.5" stroke="#a19f9d" stroke-width="1.3"/></svg>
<svg style="position:absolute;left:286px;top:195px;" width="15" height="13" viewBox="0 0 15 13"><path d="M1.5 7 L5.5 11 L13.5 2" fill="none" stroke="#a19f9d" stroke-width="1.6"/></svg>
<div style="position:absolute;left:323.5px;top:195.00px;white-space:nowrap;line-height:13px;font-size:13px;font-family:'Liberation Serif',serif;color:#444"><i><b>f</b></i><i>x</i></div>
<div style="position:absolute;left:351px;top:188px;width:607px;height:26px;background:#fff;border:1px solid #c8c6c4"></div>
<div style="position:absolute;left:363.3px;top:195.25px;white-space:nowrap;line-height:12.7px;font-size:12.7px;color:#8a8886">=УНИК(B2:B6)</div>
<svg style="position:absolute;left:944px;top:196px;" width="11" height="8" viewBox="0 0 11 8"><path d="M1.5 1.5 L5.5 5.5 L9.5 1.5" fill="none" stroke="#555" stroke-width="1.8"/></svg>
<div style="position:absolute;left:17px;top:224px;width:925px;height:19px;background:#e6e6e6"></div>
<div style="position:absolute;left:17px;top:224px;width:25px;height:518px;background:#e6e6e6"></div>
<div style="position:absolute;left:43px;top:244px;width:898px;height:498px;background:#fff"></div>
<div style="position:absolute;left:185px;top:244px;width:1px;height:498px;background:#e1e1e1"></div>
<div style="position:absolute;left:329px;top:244px;width:1px;height:498px;background:#e1e1e1"></div>
<div style="position:absolute;left:416px;top:244px;width:1px;height:498px;background:#e1e1e1"></div>
<div style="position:absolute;left:480px;top:244px;width:1px;height:498px;background:#e1e1e1"></div>
<div style="position:absolute;left:544px;top:244px;width:1px;height:498px;background:#e1e1e1"></div>
<div style="position:absolute;left:608px;top:244px;width:1px;height:498px;background:#e1e1e1"></div>
<div style="position:absolute;left:672px;top:244px;width:1px;height:498px;background:#e1e1e1"></div>
<div style="position:absolute;left:736px;top:244px;width:1px;height:498px;background:#e1e1e1"></div>
<div style="position:absolute;left:800px;top:244px;width:1px;height:498px;background:#e1e1e1"></div>
<div style="position:absolute;left:864px;top:244px;width:1px;height:498px;background:#e1e1e1"></div>
<div style="position:absolute;left:928px;top:244px;width:1px;height:498px;background:#e1e1e1"></div>
<div style="position:absolute;left:43px;top:264px;width:898px;height:1px;background:#e1e1e1"></div>
<div style="position:absolute;left:43px;top:285px;width:898px;height:1px;background:#e1e1e1"></div>
<div style="position:absolute;left:43px;top:306px;width:898px;height:1px;background:#e1e1e1"></div>
<div style="position:absolute;left:43px;top:327px;width:898px;height:1px;background:#e1e1e1"></div>
<div style="position:absolute;left:43px;top:348px;width:898px;height:1px;background:#e1e1e1"></div>
<div style="position:absolute;left:43px;top:369px;width:898px;height:1px;background:#e1e1e1"></div>
<div style="position:absolute;left:43px;top:389px;width:898px;height:1px;background:#e1e1e1"></div>
<div style="position:absolute;left:43px;top:409px;width:898px;height:1px;background:#e1e1e1"></div>
<div style="position:absolute;left:43px;top:429px;width:898px;height:1px;background:#e1e1e1"></div>
<div style="position:absolute;left:43px;top:449px;width:898px;height:1px;background:#e1e1e1"></div>
<div style="position:absolute;left:43px;top:469px;width:898px;height:1px;background:#e1e1e1"></div>
<div style="position:absolute;left:43px;top:489px;width:898px;height:1px;background:#e1e1e1"></div>
<div style="position:absolute;left:43px;top:509px;width:898px;height:1px;background:#e1e1e1"></div>
<div style="position:absolute;left:43px;top:529px;width:898px;height:1px;background:#e1e1e1"></div>
<div style="position:absolute;left:43px;top:549px;width:898px;height:1px;background:#e1e1e1"></div>
<div style="position:absolute;left:43px;top:569px;width:898px;height:1px;background:#e1e1e1"></div>
<div style="position:absolute;left:43px;top:589px;width:898px;height:1px;background:#e1e1e1"></div>
<div style="position:absolute;left:43px;top:609px;width:898px;height:1px;background:#e1e1e1"></div>
<div style="position:absolute;left:43px;top:629px;width:898px;height:1px;background:#e1e1e1"></div>
<div style="position:absolute;left:43px;top:649px;width:898px;height:1px;background:#e1e1e1"></div>
<div style="position:absolute;left:43px;top:669px;width:898px;height:1px;background:#e1e1e1"></div>
<div style="position:absolute;left:43px;top:689px;width:898px;height:1px;background:#e1e1e1"></div>
<div style="position:absolute;left:43px;top:709px;width:898px;height:1px;background:#e1e1e1"></div>
<div style="position:absolute;left:43px;top:729px;width:898px;height:1px;background:#e1e1e1"></div>
<div style="position:absolute;left:185px;top:224px;width:1px;height:19px;background:#ababab"></div>
<div style="position:absolute;left:329px;top:224px;width:1px;height:19px;background:#ababab"></div>
<div style="position:absolute;left:416px;top:224px;width:1px;height:19px;background:#ababab"></div>
<div style="position:absolute;left:480px;top:224px;width:1px;height:19px;background:#ababab"></div>
<div style="position:absolute;left:544px;top:224px;width:1px;height:19px;background:#ababab"></div>
<div style="position:absolute;left:608px;top:224px;width:1px;height:19px;background:#ababab"></div>
<div style="position:absolute;left:672px;top:224px;width:1px;height:19px;background:#ababab"></div>
<div style="position:absolute;left:736px;top:224px;width:1px;height:19px;background:#ababab"></div>
<div style="position:absolute;left:800px;top:224px;width:1px;height:19px;background:#ababab"></div>
<div style="position:absolute;left:864px;top:224px;width:1px;height:19px;background:#ababab"></div>
<div style="position:absolute;left:928px;top:224px;width:1px;height:19px;background:#ababab"></div>
<div style="position:absolute;left:17px;top:264px;width:25px;height:1px;background:#ababab"></div>
<div style="position:absolute;left:17px;top:285px;width:25px;height:1px;background:#ababab"></div>
<div style="position:absolute;left:17px;top:306px;width:25px;height:1px;background:#ababab"></div>
<div style="position:absolute;left:17px;top:327px;width:25px;height:1px;background:#ababab"></div>
<div style="position:absolute;left:17px;top:348px;width:25px;height:1px;background:#ababab"></div>
<div style="position:absolute;left:17px;top:369px;width:25px;height:1px;background:#ababab"></div>
<div style="position:absolute;left:17px;top:389px;width:25px;height:1px;background:#ababab"></div>
<div style="position:absolute;left:17px;top:409px;width:25px;height:1px;background:#ababab"></div>
<div style="position:absolute;left:17px;top:429px;width:25px;height:1px;background:#ababab"></div>
<div style="position:absolute;left:17px;top:449px;width:25px;height:1px;background:#ababab"></div>
<div style="position:absolute;left:17px;top:469px;width:25px;height:1px;background:#ababab"></div>
<div style="position:absolute;left:17px;top:489px;width:25px;height:1px;background:#ababab"></div>
<div style="position:absolute;left:17px;top:509px;width:25px;height:1px;background:#ababab"></div>
<div style="position:absolute;left:17px;top:529px;width:25px;height:1px;background:#ababab"></div>
<div style="position:absolute;left:17px;top:549px;width:25px;height:1px;background:#ababab"></div>
<div style="position:absolute;left:17px;top:569px;width:25px;height:1px;background:#ababab"></div>
<div style="position:absolute;left:17px;top:589px;width:25px;height:1px;background:#ababab"></div>
<div style="position:absolute;left:17px;top:609px;width:25px;height:1px;background:#ababab"></div>
<div style="position:absolute;left:17px;top:629px;width:25px;height:1px;background:#ababab"></div>
<div style="position:absolute;left:17px;top:649px;width:25px;height:1px;background:#ababab"></div>
<div style="position:absolute;left:17px;top:669px;width:25px;height:1px;background:#ababab"></div>
<div style="position:absolute;left:17px;top:689px;width:25px;height:1px;background:#ababab"></div>
<div style="position:absolute;left:17px;top:709px;width:25px;height:1px;background:#ababab"></div>
<div style="position:absolute;left:17px;top:729px;width:25px;height:1px;background:#ababab"></div>
<div style="position:absolute;left:17px;top:243px;width:924px;height:1px;background:#ababab"></div>
<div style="position:absolute;left:42px;top:224px;width:1px;height:518px;background:#ababab"></div>
<div style="position:absolute;left:941px;top:243px;width:1px;height:499px;background:#ababab"></div>
<div style="position:absolute;left:17px;top:742px;width:925px;height:1px;background:#ababab"></div>
<svg style="position:absolute;left:26px;top:227px;" width="14" height="14" viewBox="0 0 14 14"><path d="M13 1 V13 H1 Z" fill="#b5b5b5"/></svg>
<div style="position:absolute;left:416px;top:224px;width:64px;height:19px;background:#d2d2d2"></div>
<div style="position:absolute;left:416px;top:224px;width:1px;height:19px;background:#ababab"></div>
<div style="position:absolute;left:480px;top:224px;width:1px;height:19px;background:#ababab"></div>
<div style="position:absolute;left:416px;top:242px;width:65px;height:2px;background:#217346"></div>
<div style="position:absolute;left:17px;top:286px;width:25px;height:20px;background:#d2d2d2"></div>
<div style="position:absolute;left:41px;top:285px;width:2px;height:22px;background:#217346"></div>
<div style="position:absolute;left:43px;top:228.14px;width:142px;text-align:center;line-height:12px;font-size:12px;color:#111">A</div>
<div style="position:absolute;left:186px;top:228.14px;width:143px;text-align:center;line-height:12px;font-size:12px;color:#111">B</div>
<div style="position:absolute;left:330px;top:228.14px;width:86px;text-align:center;line-height:12px;font-size:12px;color:#111">C</div>
<div style="position:absolute;left:417px;top:228.14px;width:63px;text-align:center;line-height:12px;font-size:12px;color:#217346">D</div>
<div style="position:absolute;left:481px;top:228.14px;width:63px;text-align:center;line-height:12px;font-size:12px;color:#111">E</div>
<div style="position:absolute;left:545px;top:228.14px;width:63px;text-align:center;line-height:12px;font-size:12px;color:#111">F</div>
<div style="position:absolute;left:609px;top:228.14px;width:63px;text-align:center;line-height:12px;font-size:12px;color:#111">G</div>
<div style="position:absolute;left:673px;top:228.14px;width:63px;text-align:center;line-height:12px;font-size:12px;color:#111">H</div>
<div style="position:absolute;left:737px;top:228.14px;width:63px;text-align:center;line-height:12px;font-size:12px;color:#111">I</div>
<div style="position:absolute;left:801px;top:228.14px;width:63px;text-align:center;line-height:12px;font-size:12px;color:#111">J</div>
<div style="position:absolute;left:865px;top:228.14px;width:63px;text-align:center;line-height:12px;font-size:12px;color:#111">K</div>
<div style="position:absolute;left:17px;top:248.07px;width:25px;text-align:center;line-height:13.5px;font-size:13.5px;color:#262626">1</div>
<div style="position:absolute;left:17px;top:269.07px;width:25px;text-align:center;line-height:13.5px;font-size:13.5px;color:#262626">2</div>
<div style="position:absolute;left:17px;top:290.07px;width:25px;text-align:center;line-height:13.5px;font-size:13.5px;color:#217346">3</div>
<div style="position:absolute;left:17px;top:311.07px;width:25px;text-align:center;line-height:13.5px;font-size:13.5px;color:#262626">4</div>
<div style="position:absolute;left:17px;top:332.07px;width:25px;text-align:center;line-height:13.5px;font-size:13.5px;color:#262626">5</div>
<div style="position:absolute;left:17px;top:353.07px;width:25px;text-align:center;line-height:13.5px;font-size:13.5px;color:#262626">6</div>
<div style="position:absolute;left:17px;top:373.57px;width:25px;text-align:center;line-height:13.5px;font-size:13.5px;color:#262626">7</div>
<div style="position:absolute;left:17px;top:393.57px;width:25px;text-align:center;line-height:13.5px;font-size:13.5px;color:#262626">8</div>
<div style="position:absolute;left:17px;top:413.57px;width:25px;text-align:center;line-height:13.5px;font-size:13.5px;color:#262626">9</div>
<div style="position:absolute;left:17px;top:433.57px;width:25px;text-align:center;line-height:13.5px;font-size:13.5px;color:#262626">10</div>
<div style="position:absolute;left:17px;top:453.57px;width:25px;text-align:center;line-height:13.5px;font-size:13.5px;color:#262626">11</div>
<div style="position:absolute;left:17px;top:473.57px;width:25px;text-align:center;line-height:13.5px;font-size:13.5px;color:#262626">12</div>
<div style="position:absolute;left:17px;top:493.57px;width:25px;text-align:center;line-height:13.5px;font-size:13.5px;color:#262626">13</div>
<div style="position:absolute;left:17px;top:513.57px;width:25px;text-align:center;line-height:13.5px;font-size:13.5px;color:#262626">14</div>
<div style="position:absolute;left:17px;top:533.57px;width:25px;text-align:center;line-height:13.5px;font-size:13.5px;color:#262626">15</div>
<div style="position:absolute;left:17px;top:553.57px;width:25px;text-align:center;line-height:13.5px;font-size:13.5px;color:#262626">16</div>
<div style="position:absolute;left:17px;top:573.57px;width:25px;text-align:center;line-height:13.5px;font-size:13.5px;color:#262626">17</div>
<div style="position:absolute;left:17px;top:593.57px;width:25px;text-align:center;line-height:13.5px;font-size:13.5px;color:#262626">18</div>
<div style="position:absolute;left:17px;top:613.57px;width:25px;text-align:center;line-height:13.5px;font-size:13.5px;color:#262626">19</div>
<div style="position:absolute;left:17px;top:633.57px;width:25px;text-align:center;line-height:13.5px;font-size:13.5px;color:#262626">20</div>
<div style="position:absolute;left:17px;top:653.57px;width:25px;text-align:center;line-height:13.5px;font-size:13.5px;color:#262626">21</div>
<div style="position:absolute;left:17px;top:673.57px;width:25px;text-align:center;line-height:13.5px;font-size:13.5px;color:#262626">22</div>
<div style="position:absolute;left:17px;top:693.57px;width:25px;text-align:center;line-height:13.5px;font-size:13.5px;color:#262626">23</div>
<div style="position:absolute;left:17px;top:713.57px;width:25px;text-align:center;line-height:13.5px;font-size:13.5px;color:#262626">24</div>
<div style="position:absolute;left:17px;top:733.57px;width:25px;text-align:center;line-height:13.5px;font-size:13.5px;color:#262626">25</div>
<div style="position:absolute;left:17px;top:743px;width:946px;height:4px;background:#e6e6e6"></div>
<div style="position:absolute;left:43px;top:244px;width:287px;height:20px;background:#217346"></div>
<div style="position:absolute;left:43px;top:263px;width:287px;height:1px;background:#e6e0e0"></div>
<div style="position:absolute;left:43px;top:284px;width:287px;height:2px;background:#d9d9d9"></div>
<div style="position:absolute;left:43px;top:305px;width:287px;height:2px;background:#d9d9d9"></div>
<div style="position:absolute;left:43px;top:326px;width:287px;height:2px;background:#d9d9d9"></div>
<div style="position:absolute;left:43px;top:347px;width:287px;height:2px;background:#d9d9d9"></div>
<div style="position:absolute;left:43px;top:368px;width:287px;height:2px;background:#d9d9d9"></div>
<div style="position:absolute;left:184px;top:264px;width:2px;height:106px;background:#d9d9d9"></div>
<div style="position:absolute;left:328px;top:264px;width:2px;height:106px;background:#d9d9d9"></div>
<div style="position:absolute;left:186px;top:349px;width:142px;height:19px;background:#f8f8f8"></div>
<div style="position:absolute;left:43px;top:245.90px;width:142px;text-align:center;white-space:nowrap;line-height:15px;font-size:15px;color:#fff"><b>ФИО</b></div>
<div style="position:absolute;left:186px;top:245.90px;width:143px;text-align:center;white-space:nowrap;line-height:15px;font-size:15px;color:#fff"><b>Отдел</b></div>
<div style="position:absolute;left:42px;top:268.65px;width:142px;text-align:center;white-space:nowrap;line-height:14px;font-size:14px;color:#000">Морозов А.Д.</div>
<div style="position:absolute;left:186px;top:268.65px;width:143px;text-align:center;white-space:nowrap;line-height:14px;font-size:14px;color:#000">Продажи</div>
<div style="position:absolute;left:42px;top:289.65px;width:142px;text-align:center;white-space:nowrap;line-height:14px;font-size:14px;color:#000">Сидоров П.А.</div>
<div style="position:absolute;left:186px;top:289.65px;width:143px;text-align:center;white-space:nowrap;line-height:14px;font-size:14px;color:#000">IT</div>
<div style="position:absolute;left:42px;top:310.65px;width:142px;text-align:center;white-space:nowrap;line-height:14px;font-size:14px;color:#000">Иванов И.И.</div>
<div style="position:absolute;left:186px;top:310.65px;width:143px;text-align:center;white-space:nowrap;line-height:14px;font-size:14px;color:#000">IT</div>
<div style="position:absolute;left:42px;top:331.65px;width:142px;text-align:center;white-space:nowrap;line-height:14px;font-size:14px;color:#000">Петрова А.С.</div>
<div style="position:absolute;left:186px;top:331.65px;width:143px;text-align:center;white-space:nowrap;line-height:14px;font-size:14px;color:#000">Продажи</div>
<div style="position:absolute;left:42px;top:352.65px;width:142px;text-align:center;white-space:nowrap;line-height:14px;font-size:14px;color:#000">Козлова М.В.</div>
<div style="position:absolute;left:186px;top:352.65px;width:143px;text-align:center;white-space:nowrap;line-height:14px;font-size:14px;color:#000">HR</div>
<div style="position:absolute;left:419.5px;top:268.92px;white-space:nowrap;line-height:13.8px;font-size:13.8px;color:#000">Продажи</div>
<div style="position:absolute;left:419.5px;top:289.60px;white-space:nowrap;line-height:13px;font-size:13px;color:#000">IT</div>
<div style="position:absolute;left:419.5px;top:312.44px;white-space:nowrap;line-height:12px;font-size:12px;color:#000">HR</div>
<div style="position:absolute;left:416px;top:264px;width:65px;height:64px;border:1px solid #4472c4"></div>
<div style="position:absolute;left:415px;top:284px;width:67px;height:23px;border:2px solid #217346"></div>
<div style="position:absolute;left:478px;top:303px;width:6px;height:6px;background:#217346;border:1px solid #fff"></div>
<div style="position:absolute;left:405.5px;top:253.7px;width:88.2px;height:84.2px;border:4px solid #fa0000;border-radius:11px;box-shadow:0 2px 4px rgba(0,0,0,0.35), inset 0 0 7px rgba(0,0,0,0.35)"></div>
<div style="position:absolute;left:942px;top:224px;width:21px;height:519px;background:#e6e6e6"></div>
<div style="position:absolute;left:945px;top:226px;width:15px;height:15px;background:#fff;border:1px solid #ababab"></div>
<svg style="position:absolute;left:948px;top:230px;" width="9" height="6" viewBox="0 0 9 6"><path d="M0.5 5 L4.5 1 L8.5 5 Z" fill="#606060"/></svg>
<div style="position:absolute;left:945px;top:241px;width:15px;height:466px;background:#fff;border:1px solid #ababab"></div>
<div style="position:absolute;left:945px;top:707px;width:15px;height:21px;background:#dadada"></div>
<div style="position:absolute;left:945px;top:728px;width:15px;height:15px;background:#fff;border:1px solid #ababab"></div>
<svg style="position:absolute;left:948px;top:733px;" width="9" height="6" viewBox="0 0 9 6"><path d="M0.5 1 L4.5 5 L8.5 1 Z" fill="#606060"/></svg>
<div style="position:absolute;left:17px;top:743px;width:946px;height:27px;background:#e6e6e6"></div>
<svg style="position:absolute;left:42px;top:751px;" width="8" height="9" viewBox="0 0 8 9"><path d="M6.5 0.5 V8.5 L1.5 4.5 Z" fill="#c4c4c4"/></svg>
<svg style="position:absolute;left:72px;top:751px;" width="8" height="9" viewBox="0 0 8 9"><path d="M1.5 0.5 V8.5 L6.5 4.5 Z" fill="#c4c4c4"/></svg>
<div style="position:absolute;left:117px;top:746px;width:1px;height:20px;background:#8a8a8a"></div>
<div style="position:absolute;left:196px;top:746px;width:1px;height:20px;background:#8a8a8a"></div>
<div style="position:absolute;left:256px;top:746px;width:1px;height:20px;background:#8a8a8a"></div>
<div style="position:absolute;left:316px;top:746px;width:1px;height:20px;background:#8a8a8a"></div>
<div style="position:absolute;left:376px;top:746px;width:1px;height:20px;background:#8a8a8a"></div>
<div style="position:absolute;left:129.5px;top:750.20px;white-space:nowrap;line-height:12.4px;font-size:12.4px;color:#444">Макрос1</div>
<div style="position:absolute;left:208.7px;top:750.20px;white-space:nowrap;line-height:12.4px;font-size:12.4px;color:#444">Лист1</div>
<div style="position:absolute;left:269px;top:750.20px;white-space:nowrap;line-height:12.4px;font-size:12.4px;color:#444">Лист4</div>
<div style="position:absolute;left:329.5px;top:750.20px;white-space:nowrap;line-height:12.4px;font-size:12.4px;color:#444">Лист2</div>
<div style="position:absolute;left:389.2px;top:750.20px;white-space:nowrap;line-height:12.4px;font-size:12.4px;color:#444">Лист3</div>
<div style="position:absolute;left:436px;top:742px;width:60px;height:25px;background:#fff;border-left:1px solid #9a9a9a;border-right:1px solid #9a9a9a"></div>
<div style="position:absolute;left:436px;top:765px;width:60px;height:2px;background:#217346"></div>
<div style="position:absolute;left:448.3px;top:750.29px;white-space:nowrap;line-height:12.3px;font-size:12.3px;color:#217346"><b>Лист5</b></div>
<svg style="position:absolute;left:528px;top:747px;" width="18" height="18" viewBox="0 0 18 18"><g fill="none" stroke="#666" stroke-width="1.3"><circle cx="9" cy="9" r="7.5"/><path d="M9 5 V13 M5 9 H13"/></g></svg>
<div style="position:absolute;left:584px;top:750px;width:2px;height:2px;background:#a0a0a0;border-radius:1px"></div>
<div style="position:absolute;left:584px;top:754.5px;width:2px;height:2px;background:#a0a0a0;border-radius:1px"></div>
<div style="position:absolute;left:584px;top:759px;width:2px;height:2px;background:#a0a0a0;border-radius:1px"></div>
<div style="position:absolute;left:601px;top:749px;width:16px;height:15px;background:#fff;border:1px solid #ababab"></div>
<svg style="position:absolute;left:605px;top:752px;" width="7" height="9" viewBox="0 0 7 9"><path d="M5.5 0.5 V8.5 L1 4.5 Z" fill="#606060"/></svg>
<div style="position:absolute;left:616px;top:749px;width:282px;height:15px;background:#fff;border:1px solid #ababab"></div>
<div style="position:absolute;left:898px;top:749px;width:29px;height:15px;background:#dadada"></div>
<div style="position:absolute;left:927px;top:749px;width:15px;height:15px;background:#fff;border:1px solid #ababab"></div>
<svg style="position:absolute;left:932px;top:752px;" width="7" height="9" viewBox="0 0 7 9"><path d="M1.5 0.5 V8.5 L6 4.5 Z" fill="#606060"/></svg>
<div style="position:absolute;left:17px;top:770px;width:946px;height:1px;background:#d0d0d0"></div>
<div style="position:absolute;left:17px;top:771px;width:946px;height:21px;background:#f3f2f1;border-radius:0 0 7px 7px"></div>
<div style="position:absolute;left:25.8px;top:775.65px;white-space:nowrap;line-height:11.4px;font-size:11.4px;color:#444">Готово</div>
<svg style="position:absolute;left:82px;top:774px;" width="17" height="15" viewBox="0 0 17 15"><g fill="none" stroke="#444" stroke-width="1.1"><path d="M1.5 1.5 H14.5 M1.5 3.5 H14.5 V7 M1.5 3.5 V13.5 H7 M3.5 6.5 H6 M3.5 9 H6"/><circle cx="11.5" cy="10.5" r="3.6"/></g><circle cx="11.5" cy="10.5" r="1.6" fill="#444"/></svg>
<div style="position:absolute;left:649px;top:771px;width:40px;height:21px;background:#d6d6d6"></div>
<svg style="position:absolute;left:661px;top:773px;" width="15" height="15" viewBox="0 0 15 15"><g fill="none" stroke="#444" stroke-width="1.35"><rect x="1.8" y="1.8" width="11.4" height="11.4"/><path d="M5.6 1.8 V13.2 M9.4 1.8 V13.2 M1.8 5.6 H13.2 M1.8 9.4 H13.2"/></g></svg>
<svg style="position:absolute;left:701px;top:773px;" width="16" height="15" viewBox="0 0 16 15"><g fill="none" stroke="#444" stroke-width="1.2"><rect x="1.1" y="1.1" width="13.8" height="12.8"/><rect x="4.1" y="3.6" width="7.8" height="7.8"/><path d="M6 6 H10 M6 8 H10"/></g></svg>
<svg style="position:absolute;left:741px;top:773px;" width="16" height="15" viewBox="0 0 16 15"><g fill="none" stroke="#444" stroke-width="1.2"><path d="M1.1 1.1 H14.9 V13.9 H1.1 Z M1.1 9.5 H11 V1.1 M4.6 1.1 V6.5 M7.6 1.1 V6.5"/></g></svg>
<div style="position:absolute;left:775px;top:780px;width:8px;height:1.3px;background:#444"></div>
<div style="position:absolute;left:788px;top:780.5px;width:100px;height:1px;background:#a0a0a0"></div>
<div style="position:absolute;left:835.5px;top:775.5px;width:5.5px;height:11px;background:#605e5c"></div>
<div style="position:absolute;left:892.5px;top:780px;width:8px;height:1.3px;background:#444"></div>
<div style="position:absolute;left:896px;top:776.2px;width:1.3px;height:8px;background:#444"></div>
<div style="position:absolute;left:915px;top:775.99px;white-space:nowrap;line-height:11px;font-size:11px;color:#444">100 %</div>
</body></html>
